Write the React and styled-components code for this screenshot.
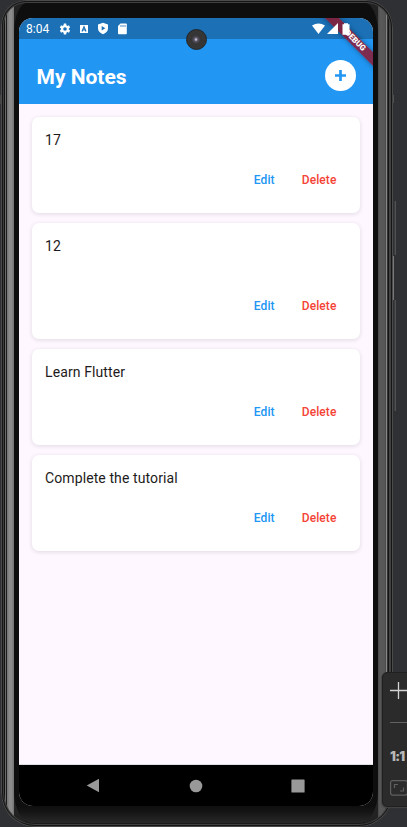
import React from 'react';
import styled, { createGlobalStyle } from 'styled-components';

const Global = createGlobalStyle`
  * { box-sizing: border-box; }
  body { margin: 0; background: #2f3033; overflow: hidden; }
  button { font: inherit; border: 0; padding: 0; background: none; }
`;

const Desk = styled.main`
  position: relative;
  width: 407px;
  height: 827px;
  overflow: hidden;
  background: #2f3033;
  font-family: Roboto, sans-serif;
`;

const Device = styled.div`
  width: 392px;
  height: 827px;
  margin-left: 1px;
  padding: 3px 14px 4px 13px;
  border-radius: 25px 27px 34px 34px;
  background:
    linear-gradient(#1b1b1b, #1b1b1b) 24px 0 / 340px 100% no-repeat,
    linear-gradient(90deg,
      #111 0 2px, #3c3c3c 2px 3px, #111 3px 4px,
      #6a6a6a 4px 5px, #1d1d1d 5px 6px, #777 6px 7px, #8b8b8b 8px 11px, #777 12px 13px,
      #222 13px 24px, #222 364px 377px, #494949 377px, #595959 379px, #555 384px, #444 385px,
      #858585 385px 386px, #333 386px 387px, #151515 387px 388px, #444 388px 389px,
      #161616 389px);
  box-shadow: inset 0 0 0 1px #4b4b4b, inset 0 0 0 2px #151515, inset 0 0 0 3px #404040;
`;

const Bezel = styled.div`
  width: 364px;
  height: 820px;
  padding: 15px 5px 17px;
  border-radius: 13px 13px 18px 18px / 30px 30px 32px 32px;
  background: linear-gradient(#0e0e0e 0 803px, #151515 809px, #292929 820px);
`;

const Screen = styled.div`
  display: flex;
  flex-direction: column;
  width: 354px;
  height: 788px;
  overflow: hidden;
  position: relative;
  border-radius: 14px;
  background: #fef7ff;
`;

const StatusBar = styled.div`
  display: flex;
  align-items: center;
  justify-content: space-between;
  height: 21px;
  flex: none;
  padding: 0 21.5px 0 7px;
  background: #1b70b6;
  color: #fff;
`;

const Clock = styled.time`
  width: 33px;
  padding-top: 1px;
  font: 400 12px/21px Roboto, sans-serif;
`;

const Indicators = styled.div`
  display: flex;
  align-items: center;
  position: relative;
  z-index: 1;
  gap: ${(p) => p.$gap}px;
  svg { display: block; }
`;

const AppBar = styled.header`
  display: flex;
  align-items: center;
  justify-content: space-between;
  height: 65px;
  flex: none;
  padding: 8px 17px 0 17.5px;
  background: #2196f3;
`;

const Title = styled.h1`
  margin: 3px 0 0;
  color: #fff;
  font-size: 21px;
  line-height: 28px;
  font-weight: 700;
`;

const AddButton = styled.button`
  display: grid;
  place-items: center;
  width: 31px;
  height: 31px;
  border-radius: 50%;
  background: #fff;
`;

const NoteList = styled.section`
  display: flex;
  flex-direction: column;
  gap: 10px;
  flex: 1;
  padding: 13px;
  border-bottom: 1px solid #dedee2;
`;

const Note = styled.article`
  display: flex;
  flex-direction: column;
  justify-content: space-between;
  height: ${(p) => (p.$tall ? 116 : 96)}px;
  padding: 13px 23.5px 23.5px 13px;
  border-radius: 7px;
  background: #fff;
  box-shadow: 0 1px 4px rgba(50, 30, 60, 0.14);
`;

const NoteText = styled.p`
  margin: 0;
  color: #1d1b20;
  font-size: 14px;
  line-height: 20px;
  letter-spacing: 0.1px;
`;

const Actions = styled.div`
  display: flex;
  justify-content: flex-end;
  gap: 27px;
`;

const Action = styled.button`
  color: ${(p) => (p.$danger ? '#f44336' : '#2196f3')};
  font-size: 12px;
  line-height: 20px;
  font-weight: 500;
  letter-spacing: 0.1px;
`;

const NavBar = styled.nav`
  display: flex;
  align-items: center;
  justify-content: space-between;
  height: 41px;
  flex: none;
  padding: 0 68px 0 67px;
  background: #000;
  svg { display: block; }
`;

const DebugBanner = styled.div`
  position: absolute;
  top: 18px;
  right: -28px;
  width: 92px;
  height: 10px;
  transform: rotate(45deg);
  background: rgba(145, 21, 44, 0.82);
  box-shadow: 0 0 5px rgba(0, 0, 0, 0.4);
  color: #fff;
  font: 900 8px/10px Roboto, sans-serif;
  text-align: center;
`;

const Camera = styled.div`
  position: absolute;
  left: 186px;
  top: 29px;
  width: 21px;
  height: 21px;
  border-radius: 50%;
  border: 1px solid #222;
  background: radial-gradient(circle at 9px 9.5px, #b9b9cc 0 0.8px, #656172 1.6px, #494350 3px, #353535 4.5px, #373737 100%);
`;

const SideKey = styled.div`
  position: absolute;
  left: ${(p) => p.$x}px;
  top: ${(p) => p.$y}px;
  width: ${(p) => p.$w}px;
  height: ${(p) => p.$h}px;
  border-left: 1px solid ${(p) => p.$edge};
  background: #505153;
`;

const ZoomPanel = styled.aside`
  position: absolute;
  left: 382px;
  top: 672px;
  display: flex;
  flex-direction: column;
  width: 40px;
  height: 135px;
  padding: 9px 0 0 7px;
  border: 1px solid #202020;
  border-radius: 5px;
  background: #2b2b2b;
  box-shadow: -1px 1px 1px #454545;
  svg { display: block; flex: none; }
`;

const Divider = styled.div`
  width: 18px;
  height: 1px;
  margin-top: 23px;
  background: #626262;
`;

const Scale = styled.span`
  margin: 25px 0 15px;
  color: #b8b8b8;
  font: 900 13px/17px Inter, sans-serif;
  letter-spacing: -0.7px;
`;

const notes = [
  { text: '17' },
  { text: '12', tall: true },
  { text: 'Learn Flutter' },
  { text: 'Complete the tutorial' },
];

export default function App() {
  return (
    <Desk>
      <Global />
      <SideKey $x={0} $y={95} $w={1} $h={9} $edge="#444" />
      <SideKey $x={392} $y={95} $w={2} $h={8} $edge="#444" />
      <SideKey $x={394} $y={201} $w={2} $h={54} $edge="#3c3d3e" />
      <SideKey $x={393} $y={256} $w={1} $h={44} $edge="#777" />
      <SideKey $x={394} $y={300} $w={2} $h={111} $edge="#3c3d3e" />
      <Device>
        <Bezel>
          <Screen>
            <StatusBar>
              <Indicators $gap={0}>
                <Clock>8:04</Clock>
                <Indicators $gap={7}>
                  <svg width="12" height="12" viewBox="2 2 20 20" fill="#fff"><path d="M19.4 13a8 8 0 0 0 0-2l2.1-1.6-2-3.5-2.5 1a7 7 0 0 0-1.7-1L15 3h-4l-.4 2.900a7 7 0 0 0-1.700 1l-2.500-1-2 3.500L6.500 11a8 8 0 0 0 0 2l-2.100 1.600 2 3.500 2.500-1a7 7 0 0 0 1.700 1L11 21h4l.4-2.900a7 7 0 0 0 1.700-1l2.500 1 2-3.500zM13 15a3 3 0 1 1 0-6 3 3 0 0 1 0 6z" transform="translate(-1)" /></svg>
                  <svg width="12" height="12" viewBox="0 0 12 12"><path d="M2 2h8v8H2z" fill="#fff" /><path d="M4 8.600 6 3.800l2 4.800M4.800 7h2.400" fill="none" stroke="#1b70b6" strokeWidth="1.200" /></svg>
                  <svg width="12" height="13" viewBox="0 0 12 13"><path d="M6 .7 11 2.500v4C11 9.300 8.700 11.300 6 12.300 3.300 11.300 1 9.300 1 6.500v-4z" fill="#fff" /><path d="M4.700 3.900v4.600l3.600-2.300z" fill="#1b70b6" /></svg>
                  <svg width="12" height="12" viewBox="0 0 12 12"><path d="M4.500.5h5.500q.8 0 .8.800v9.200q0 .8-.8.800H2.800q-.8 0-.8-.8V3z" fill="#fff" /><path d="M5 2v2M7 2v2M9 2v2" stroke="#1b70b6" strokeWidth=".8" /></svg>
                </Indicators>
              </Indicators>
              <Indicators $gap={2}>
                <svg width="13" height="11" viewBox="0 0 13 11"><path d="M0 2.500Q6.500-1.700 13 2.500L6.500 11z" fill="#fff" /></svg>
                <svg width="11" height="11" viewBox="0 0 11 11"><path d="M11 0v11H0z" fill="#fff" /></svg>
                <svg width="12" height="12" viewBox="0 0 12 12"><path d="M4 1.200V.3h4v.9h1.500v10.500h-7V1.200z" fill="#fff" /></svg>
              </Indicators>
            </StatusBar>
            <AppBar>
              <Title>My Notes</Title>
              <AddButton aria-label="Add note">
                <svg width="11" height="11" viewBox="0 0 11 11"><path d="M5.500 0v11M0 5.500h11" stroke="#2196f3" strokeWidth="2.700" /></svg>
              </AddButton>
            </AppBar>
            <NoteList>
              {notes.map((note) => (
                <Note key={note.text} $tall={note.tall}>
                  <NoteText>{note.text}</NoteText>
                  <Actions>
                    <Action>Edit</Action>
                    <Action $danger>Delete</Action>
                  </Actions>
                </Note>
              ))}
            </NoteList>
            <NavBar>
              <svg width="14" height="15" viewBox="0 0 14 15"><path d="M13 .7v13.600L.7 7.500z" fill="#999" /></svg>
              <svg width="14" height="14" viewBox="0 0 14 14"><circle cx="7" cy="7" r="6.300" fill="#999" /></svg>
              <svg width="14" height="14" viewBox="0 0 14 14"><rect x=".4" y=".4" width="13.200" height="13.200" rx=".7" fill="#999" /></svg>
            </NavBar>
            <DebugBanner>DEBUG</DebugBanner>
          </Screen>
        </Bezel>
      </Device>
      <Camera />
      <ZoomPanel>
        <svg width="17" height="17" viewBox="0 0 17 17"><path d="M8.500 0v17M0 8.500h17" stroke="#d4d4d4" strokeWidth="1.300" /></svg>
        <Divider />
        <Scale>1:1</Scale>
        <svg width="18" height="16" viewBox="0 0 18 16" fill="none" stroke="#606060" strokeWidth="1.200"><rect x=".6" y=".6" width="16.800" height="14.500" rx="2" /><path d="M4.500 8V4.500H8M10 11h3.500V7.500" /></svg>
      </ZoomPanel>
    </Desk>
  );
}
